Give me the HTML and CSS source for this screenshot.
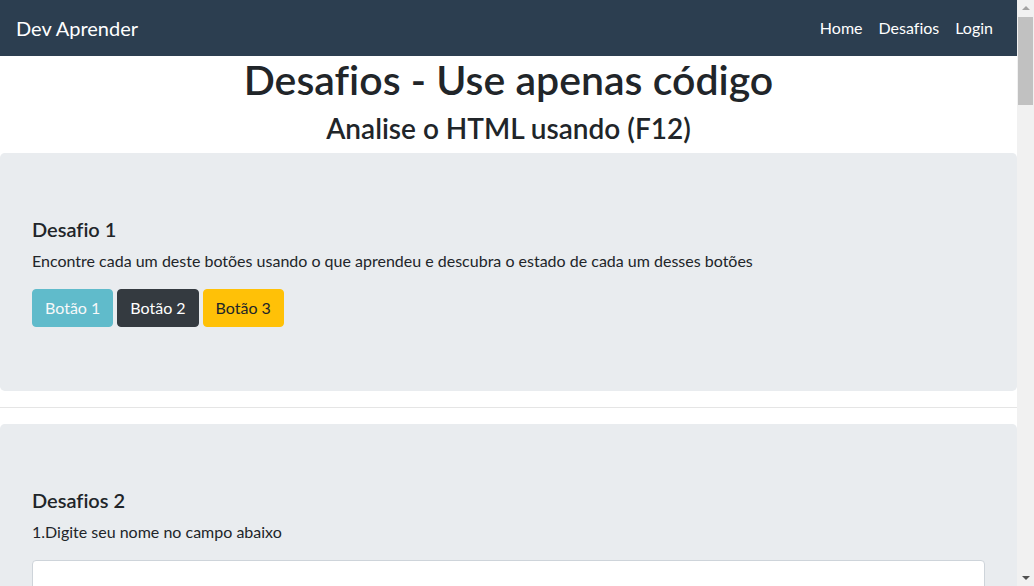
FILE: index.html
```html
<!DOCTYPE html>
<html lang="pt-br">
<head>
<meta charset="utf-8">
<title>Desafios</title>
<link rel="stylesheet" href="styles.css">
</head>
<body>
<nav class="navbar">
  <a class="brand" href="#">Dev Aprender</a>
  <ul class="nav">
    <li><a class="nav-link" href="#">Home</a></li>
    <li><a class="nav-link" href="#">Desafios</a></li>
    <li><a class="nav-link" href="#">Login</a></li>
  </ul>
</nav>
<main class="page">
  <h1 class="title">Desafios - Use apenas código</h1>
  <h2 class="subtitle">Analise o HTML usando (F12)</h2>
  <section class="jumbotron">
    <h5 class="card-title">Desafio 1</h5>
    <p class="text">Encontre cada um deste botões usando o que aprendeu e descubra o estado de cada um desses botões</p>
    <div class="buttons">
      <button class="btn btn-info" disabled>Botão 1</button>
      <button class="btn btn-dark">Botão 2</button>
      <button class="btn btn-warning">Botão 3</button>
    </div>
  </section>
  <hr class="divider">
  <section class="jumbotron">
    <h5 class="card-title">Desafios 2</h5>
    <p class="text">1.Digite seu nome no campo abaixo</p>
    <input class="form-control" type="text">
    <p class="text">2.Clique no botão abaixo</p>
  </section>
</main>
<div class="scrollbar" aria-hidden="true">
  <span class="arrow arrow-up"></span>
  <span class="thumb"></span>
  <span class="arrow arrow-down"></span>
</div>
</body>
</html>
```
FILE: styles.css
```css
html, body { margin: 0; padding: 0; }
body {
  font-family: Lato, "Liberation Sans", sans-serif;
  font-size: 16px;
  line-height: 1.5;
  color: #212529;
  background: #fff;
  padding-right: 17px;
  font-variant-ligatures: none;
}
.navbar {
  display: flex;
  align-items: center;
  justify-content: space-between;
  height: 56px;
  box-sizing: border-box;
  padding: 8px 16px;
  background: #2c3e50;
}
.brand {
  color: #fff;
  font-size: 20px;
  text-decoration: none;
  line-height: 30px;
}
.nav { display: flex; list-style: none; margin: 0; padding: 0; }
.nav-link {
  display: block;
  padding: 8px;
  color: #fff;
  text-decoration: none;
}
.title {
  margin: 0 0 8px;
  text-align: center;
  font-size: 41px;
  font-weight: 600;
  line-height: 48px;
}
.subtitle {
  margin: 0 0 7px;
  text-align: center;
  font-size: 28px;
  font-weight: 600;
  line-height: 1.2;
}
.jumbotron {
  background: #e9ecef;
  border-radius: 4.8px;
  padding: 64px 32px;
}
.card-title {
  margin: 0 0 8px;
  font-size: 20px;
  font-weight: 600;
  line-height: 1.2;
}
.text { margin: 0 0 16px; }
.buttons { display: flex; gap: 4px; }
.btn {
  font-family: inherit;
  font-size: 16px;
  line-height: 1.5;
  padding: 6px 12px;
  border: 1px solid transparent;
  border-radius: 4px;
}
.btn-info { background: #17a2b8; border-color: #17a2b8; color: #fff; }
.btn-info:disabled { opacity: .65; }
.btn-dark { background: #343a40; border-color: #343a40; color: #fff; }
.btn-warning { background: #ffc107; border-color: #ffc107; color: #212529; }
.divider {
  margin: 16px 0;
  border: 0;
  border-top: 1px solid rgba(0,0,0,.1);
}
.form-control {
  display: block;
  width: 100%;
  box-sizing: border-box;
  height: 38px;
  padding: 6px 12px;
  font-family: inherit;
  font-size: 16px;
  border: 1px solid #ced4da;
  border-radius: 4px;
  background: #fff;
  margin-bottom: 16px;
}
.scrollbar {
  position: fixed;
  top: 0;
  right: 0;
  bottom: 0;
  width: 17px;
  background: #f1f1f1;
  display: flex;
  flex-direction: column;
  align-items: center;
}
.arrow {
  width: 0;
  height: 0;
  border-left: 4px solid transparent;
  border-right: 4px solid transparent;
}
.arrow-up { border-bottom: 4px solid #a3a3a3; margin-top: 6px; }
.arrow-down { border-top: 4px solid #505050; margin-top: auto; margin-bottom: 6px; }
.thumb {
  width: 15px;
  height: 88px;
  margin-top: 7px;
  background: #c1c1c1;
}
```
